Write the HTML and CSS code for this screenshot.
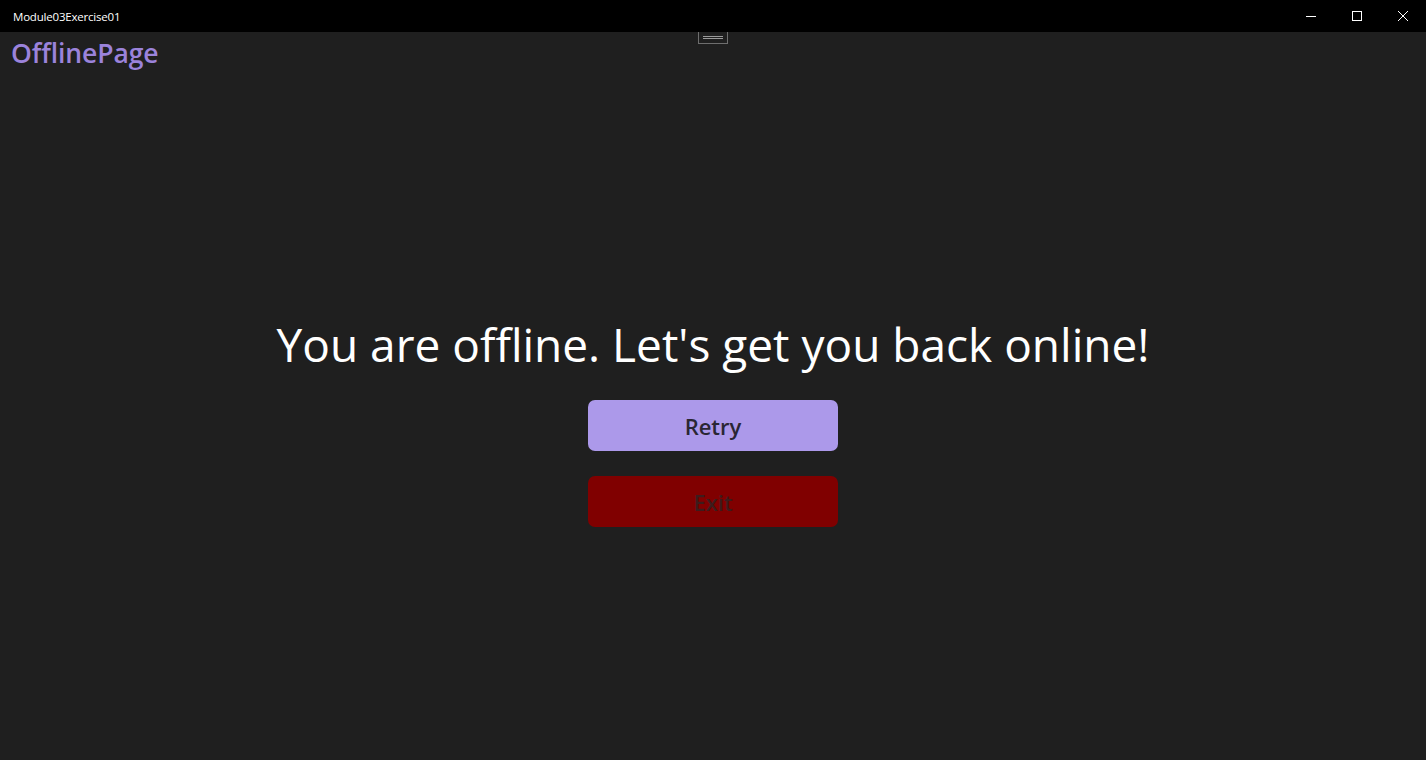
FILE: index.html
```html
<!DOCTYPE html>
<html>
<head>
<meta charset="utf-8">
<link rel="stylesheet" href="styles.css">
</head>
<body>
<div class="window">
  <header class="titlebar">
    <span class="app-title">Module03Exercise01</span>
    <div class="caption">
      <span class="cap-btn"><svg width="10" height="10" viewBox="0 0 10 10"><path d="M0 5.5h10" stroke="#fff" stroke-width="1"/></svg></span>
      <span class="cap-btn"><svg width="10" height="10" viewBox="0 0 10 10"><rect x="0.5" y="0.5" width="9" height="9" fill="none" stroke="#fff" stroke-width="1"/></svg></span>
      <span class="cap-btn"><svg width="10" height="10" viewBox="0 0 10 10"><path d="M0 0L10 10M10 0L0 10" stroke="#fff" stroke-width="1"/></svg></span>
    </div>
  </header>
  <main class="page">
    <div class="handle"><span></span></div>
    <h1 class="page-title">OfflinePage</h1>
    <section class="center">
      <p class="message">You are offline. Let's get you back online!</p>
      <button class="btn btn-retry">Retry</button>
      <button class="btn btn-exit">Exit</button>
    </section>
  </main>
</div>
</body>
</html>
```

FILE: styles.css
```css
html, body {
  margin: 0;
  padding: 0;
  background: #1f1f1f;
}
.window {
  width: 1426px;
  height: 760px;
  display: flex;
  flex-direction: column;
  overflow: hidden;
}
.titlebar {
  height: 32px;
  background: #000;
  display: flex;
  align-items: center;
  justify-content: space-between;
  flex: none;
}
.app-title {
  color: #fff;
  font-family: "Open Sans", "Noto Sans", sans-serif;
  font-size: 11.5px;
  padding-left: 13px;
  letter-spacing: -0.2px;
}
.caption {
  display: flex;
  height: 32px;
}
.cap-btn {
  width: 46px;
  height: 32px;
  display: flex;
  align-items: center;
  justify-content: center;
}
.page {
  flex: 1;
  position: relative;
  display: flex;
  flex-direction: column;
}
.handle {
  position: absolute;
  left: 698px;
  top: 0;
  width: 28px;
  height: 11px;
  border: 1px solid #6e6e6e;
  border-top: none;
  box-sizing: content-box;
  display: flex;
  align-items: center;
  justify-content: center;
}
.handle span {
  width: 20px;
  height: 3px;
  border-top: 1px solid #9a9a9a;
  border-bottom: 1px solid #9a9a9a;
  box-sizing: border-box;
}
.page-title {
  margin: 4px 0 0 11px;
  font-family: "Open Sans", "Noto Sans", sans-serif;
  font-weight: 600;
  font-size: 26.5px;
  line-height: 34px;
  color: #9b83db;
  letter-spacing: -0.1px;
}
.center {
  display: flex;
  flex-direction: column;
  align-items: center;
  margin-top: 244px;
}
.message {
  margin: 0;
  font-family: "Open Sans", "Noto Sans", sans-serif;
  font-size: 46px;
  line-height: 60px;
  color: #fff;
}
.btn {
  width: 250px;
  height: 51px;
  border: none;
  border-radius: 7px;
  font-family: "Open Sans", "Noto Sans", sans-serif;
  font-weight: 600;
  font-size: 22px;
  padding: 0;
}
.btn-retry {
  margin-top: 26px;
  background: #ac99ea;
  color: #2a2633;
}
.btn-exit {
  margin-top: 25px;
  background: #800000;
  color: #3d1c1c;
}
```
